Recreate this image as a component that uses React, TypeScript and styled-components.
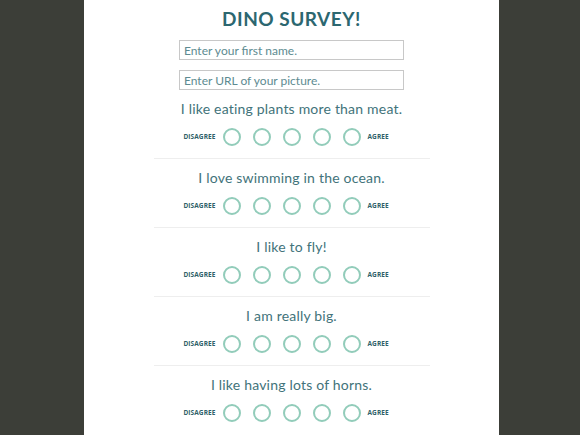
import React from "react";
import styled, { createGlobalStyle } from "styled-components";

const Global = createGlobalStyle`
  html, body { margin: 0; padding: 0; background: #3c3e38; height: 100%; overflow: hidden; }
  body { font-family: "Lato", "Open Sans", sans-serif; }
`;

const Page = styled.div`
  display: flex;
  justify-content: center;
  height: 435px;
  padding-left: 3px;
`;

const Card = styled.main`
  width: 415px;
  background: #ffffff;
  display: flex;
  flex-direction: column;
  align-items: center;
`;

const Title = styled.h1`
  margin: 7px 0 0;
  font-family: "Lato", sans-serif;
  font-weight: 700;
  font-size: 19px;
  line-height: 24px;
  letter-spacing: 0.5px;
  color: #2c6770;
`;

const Input = styled.input`
  box-sizing: border-box;
  width: 225px;
  height: 20px;
  margin-top: 9px;
  padding: 0 4px;
  border: 1px solid #c8c8c8;
  font-family: "Lato", sans-serif;
  font-size: 12px;
  color: #4b7a80;
  &::placeholder { color: #5d8b91; }
  & + & { margin-top: 10px; }
`;

const Question = styled.section<{ $last?: boolean }>`
  width: 276px;
  display: flex;
  flex-direction: column;
  align-items: center;
  border-bottom: ${(p) => (p.$last ? "none" : "1px solid #eeeeee")};
  padding-bottom: 12px;
`;

const QText = styled.p`
  margin: 0;
  padding-top: 9px;
  font-family: "Lato", sans-serif;
  font-size: 14px;
  line-height: 20px;
  letter-spacing: 0.2px;
  color: #42737a;
`;

const Scale = styled.div`
  display: grid;
  grid-template-columns: 1fr auto 1fr;
  align-items: center;
  column-gap: 7px;
  width: 100%;
  margin-top: 9px;
`;

const Label = styled.span<{ $side: "left" | "right" }>`
  justify-self: ${(p) => (p.$side === "left" ? "end" : "start")};
  font-family: "Open Sans", sans-serif;
  font-weight: 700;
  font-size: 6.5px;
  line-height: 8px;
  letter-spacing: 0.1px;
  color: #2f5f69;
`;

const Radios = styled.div`
  display: flex;
  gap: 12px;
`;

const Circle = styled.span`
  box-sizing: border-box;
  width: 18px;
  height: 18px;
  border-radius: 50%;
  border: 2px solid #92ccba;
`;

const questions = [
  "I like eating plants more than meat.",
  "I love swimming in the ocean.",
  "I like to fly!",
  "I am really big.",
  "I like having lots of horns.",
];

export default function App() {
  return (
    <>
      <Global />
      <Page>
        <Card>
          <Title>DINO SURVEY!</Title>
          <Input placeholder="Enter your first name." />
          <Input placeholder="Enter URL of your picture." />
          {questions.map((q, i) => (
            <Question key={q} $last={i === questions.length - 1}>
              <QText>{q}</QText>
              <Scale>
                <Label $side="left">DISAGREE</Label>
                <Radios>
                  {[0, 1, 2, 3, 4].map((n) => (
                    <Circle key={n} />
                  ))}
                </Radios>
                <Label $side="right">AGREE</Label>
              </Scale>
            </Question>
          ))}
        </Card>
      </Page>
    </>
  );
}
